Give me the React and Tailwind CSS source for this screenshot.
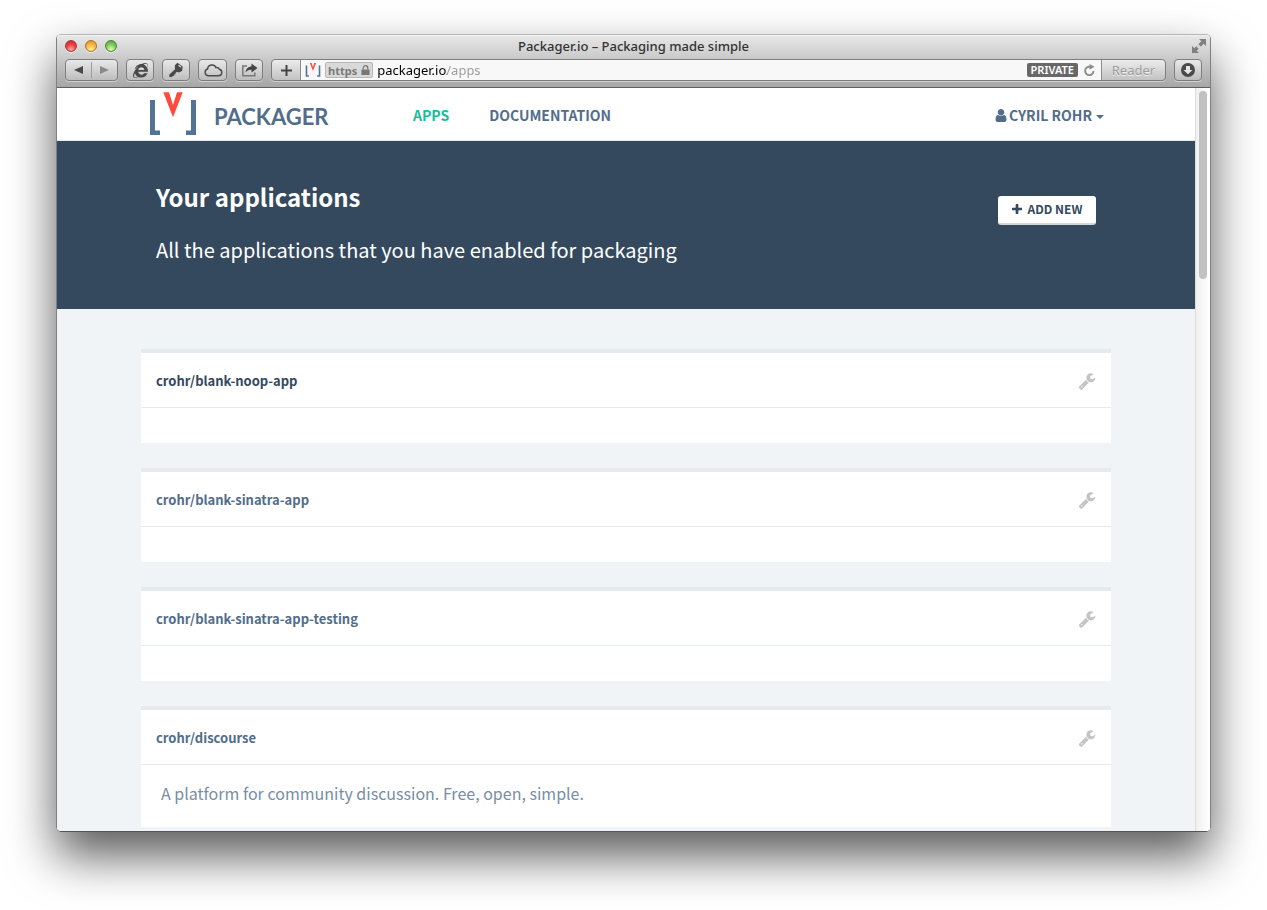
import React from "react";
import { FaInternetExplorer } from "react-icons/fa";

const apps = [
  { name: "crohr/blank-noop-app", active: true },
  { name: "crohr/blank-sinatra-app" },
  { name: "crohr/blank-sinatra-app-testing" },
  { name: "crohr/discourse", description: "A platform for community discussion. Free, open, simple." },
];

const toolButton =
  "flex h-[22px] items-center justify-center rounded-[4px] border border-[#7d7d7d] bg-linear-to-b from-[#e9e9e9] to-[#bdbdbd] text-[#4a4a4a] shadow-[0_1px_0_#d0d0d0]";

function WrenchIcon({ className }) {
  return (
    <svg viewBox="0 0 1792 1792" className={className} fill="currentColor" aria-hidden="true">
      <path d="M448 1472q0-26-19-45t-45-19-45 19-19 45 19 45 45 19 45-19 19-45zm644-420l-682 682q-37 37-90 37-52 0-91-37l-106-108q-38-36-38-90 0-53 38-91l681-681q39 98 114.5 173.5t173.5 114.5zm634-435q0 39-23 106-47 134-164.5 217.5t-258.5 83.5q-185 0-316.500-131.5t-131.5-316.5 131.5-316.5 316.5-131.5q58 0 121.5 16.5t107.5 46.5q16 11 16 28t-16 28l-293 169v224l193 107q5-3 79-48.5t135.500-81 70.500-35.5q15 0 23.5 10t8.5 25z" />
    </svg>
  );
}

function UserIcon({ className }) {
  return (
    <svg viewBox="192 128 1408 1536" preserveAspectRatio="none" className={className} fill="currentColor" aria-hidden="true">
      <path d="M1536 1399q0 109-62.5 187t-150.5 78h-854q-88 0-150.5-78t-62.5-187q0-85 8.5-160.5t31.5-152 58.5-131 94-89 134.5-34.5q131 128 313 128t313-128q76 0 134.5 34.5t94 89 58.5 131 31.5 152 8.5 160.5zm-256-887q0 159-112.5 271.5t-271.5 112.5-271.5-112.5-112.5-271.5 112.5-271.5 271.5-112.5 271.5 112.5 112.5 271.5z" />
    </svg>
  );
}

function PlusIcon({ className }) {
  return (
    <svg viewBox="192 128 1408 1408" className={className} fill="currentColor" aria-hidden="true">
      <path d="M1600 736v192q0 40-28 68t-68 28h-416v416q0 40-28 68t-68 28h-192q-40 0-68-28t-28-68v-416h-416q-40 0-68-28t-28-68v-192q0-40 28-68t68-28h416v-416q0-40 28-68t68-28h192q40 0 68 28t28 68v416h416q40 0 68 28t28 68z" />
    </svg>
  );
}

function LogoMark({ className }) {
  return (
    <svg viewBox="0 0 48 44" className={className} aria-hidden="true">
      <path d="M1 8h5v30.500h5V43H1zM47 8h-5v30.500h-5V43h10z" fill="#527393" />
      <path d="M14.300 .3h5.700L24 13 28 .3h5.700L24 25.300z" fill="#ff4b3e" />
    </svg>
  );
}

function Light({ label, className }) {
  return (
    <button
      type="button"
      aria-label={label}
      className={`size-3 rounded-full border shadow-[0_1px_0_#f4f4f4] ${className}`}
    />
  );
}

function BrowserChrome() {
  return (
    <div className="rounded-t-[4px] border-b border-[#5f5f5f] bg-linear-to-b from-[#e8e8e8] to-[#a6a6a6] font-['Noto_Sans',sans-serif] shadow-[inset_0_1px_0_#f2f2f2]">
      <div className="grid h-[22px] grid-cols-[1fr_auto_1fr] items-center px-2">
        <div className="flex gap-2">
          <Light label="Close" className="border-[#a03a38] bg-[radial-gradient(circle_at_50%_85%,#ffb3ab_0%,#f2474a_45%,#c4232a_100%)]" />
          <Light label="Minimize" className="border-[#a9712c] bg-[radial-gradient(circle_at_50%_85%,#fff2a0_0%,#fbb745_50%,#d98a24_100%)]" />
          <Light label="Zoom" className="border-[#4c8237] bg-[radial-gradient(circle_at_50%_85%,#dcffb0_0%,#83cc5f_50%,#4f9c3b_100%)]" />
        </div>
        <h1 className="text-[13px] leading-[22px] font-medium text-[#333]">Packager.io – Packaging made simple</h1>
        <button type="button" aria-label="Full screen" className="justify-self-end -mr-1 text-[#808080]">
          <svg viewBox="0 0 14 14" className="size-[14px]" fill="currentColor">
            <path d="M14 0v7l-2.300-2.300-3 3L6.300 5.300l3-3L7 0zM0 14V7l2.300 2.300 2-2 2.400 2.400-2 2L7 14z" />
            <path d="M5.500 5.500l3 3" stroke="#d4d4d4" strokeWidth="1.500" />
          </svg>
        </button>
      </div>
      <div className="flex gap-2 px-2 pt-[2px] pb-[6px]">
        <div className={`${toolButton} w-[53px]`}>
          <button type="button" aria-label="Back" className="flex h-full flex-1 items-center justify-center">
            <svg viewBox="0 0 9 8" className="h-2 w-[9px]" fill="currentColor"><path d="M9 0v8L0 4z" /></svg>
          </button>
          <span className="h-4 w-px bg-[#9c9c9c]" />
          <button type="button" aria-label="Forward" className="flex h-full flex-1 items-center justify-center text-[#8a8a8a]">
            <svg viewBox="0 0 9 8" className="h-2 w-[9px]" fill="currentColor"><path d="M0 0v8l9-4z" /></svg>
          </button>
        </div>
        <button type="button" aria-label="Internet Explorer" className={`${toolButton} w-7`}>
          <FaInternetExplorer className="size-[15px]" />
        </button>
        <button type="button" aria-label="Passwords" className={`${toolButton} w-7`}>
          <svg viewBox="0 0 16 16" className="size-4" fill="currentColor">
            <path d="M9.500 .8l5.200 3.800-.6 4.400-3.300 1.500-2-.8-1.400 1.500.3 1-1.300.1-.2 1.500-1.400.1L3.500 15.300 1.200 14.800l.2-2.300L7 7.200 6.800 3.200z" />
            <path d="M11 3.500l1.600 1.200" stroke="#d8d8d8" strokeWidth="1.400" strokeLinecap="round" />
          </svg>
        </button>
        <button type="button" aria-label="iCloud tabs" className={`${toolButton} w-[29px]`}>
          <svg viewBox="0 0 20 14" className="h-[14px] w-5" fill="none" stroke="currentColor" strokeWidth="1.400">
            <path d="M5 12.800h10.500a3.300 3.300 0 0 0 .8-6.500A2.800 2.800 0 0 0 13 4.600 4.400 4.400 0 0 0 4.600 6 3.500 3.500 0 0 0 5 12.800z" />
          </svg>
        </button>
        <button type="button" aria-label="Share" className={`${toolButton} w-7`}>
          <svg viewBox="0 0 17 14" className="h-[14px] w-[17px]">
            <path d="M6 3H1.800v9.800h12V9.500" fill="none" stroke="#777" strokeWidth="1.500" />
            <path d="M10.500 .5l6 4.500-6 4.500V6.800C7.500 6.700 5.800 7.700 4.500 9.800c.2-4 2.300-6.200 6-6.600z" fill="#444" />
          </svg>
        </button>
        <div className="flex h-[22px] min-w-0 flex-1 items-stretch rounded-[4px] border border-[#7d7d7d] bg-linear-to-b from-[#ececec] to-[#c2c2c2] shadow-[0_1px_0_#d0d0d0]">
          <button type="button" aria-label="Add bookmark" className="flex w-7 items-center justify-center text-[#444]">
            <svg viewBox="0 0 11 11" className="size-[11px]" fill="currentColor"><path d="M4.500 0h2v4.500H11v2H6.500V11h-2V6.500H0v-2h4.500z" /></svg>
          </button>
          <div className="flex min-w-0 flex-1 items-center gap-1 border-x border-[#8c8c8c] bg-[#f8f8f8] px-1">
            <LogoMark className="h-[14px] w-4" />
            <span className="flex h-4 items-center gap-1 rounded-[2px] border border-[#b8b8b8] bg-[#d9d9d9] px-[2px] text-[11px] leading-none font-bold text-[#7a7a7a]">
              https
              <svg viewBox="0 0 9 11" className="h-[10px] w-[9px]"><path d="M2 5V3.300a2.500 2.500 0 0 1 5 0V5" fill="none" stroke="#777" strokeWidth="1.400" /><path d="M0 5h9v6H0z" fill="#777" /></svg>
            </span>
            <input
              aria-label="Address"
              defaultValue="packager.io/apps"
              className="min-w-0 flex-1 bg-[linear-gradient(to_right,#000_70px,#999_70px)] bg-clip-text text-[13px] leading-5 text-transparent outline-none"
            />
            <span className="rounded-[2px] bg-[#686868] px-1 text-[11px] leading-[14px] font-semibold text-white">PRIVATE</span>
            <button type="button" aria-label="Reload" className="mx-[2px] text-[#8b8b8b]">
              <svg viewBox="0 0 11 12" className="h-3 w-[11px]"><path d="M9.500 7A4.200 4.200 0 1 1 6 2.800" fill="none" stroke="currentColor" strokeWidth="1.800" /><path d="M5.500 0l5 2.800-5 3z" fill="currentColor" /></svg>
            </button>
          </div>
          <button type="button" className="w-[63px] text-[13px] leading-5 text-[#9e9e9e] [text-shadow:0_1px_0_#eee]">Reader</button>
        </div>
        <button type="button" aria-label="Downloads" className={`${toolButton} w-7`}>
          <svg viewBox="0 0 14 14" className="size-[14px]"><circle cx="7" cy="7" r="7" fill="#4a4a4a" /><path d="M5 3h4v4h2.500L7 11.300 2.500 7H5z" fill="#e6e6e6" /></svg>
        </button>
      </div>
    </div>
  );
}

function Navbar() {
  return (
    <nav className="border-b border-[#e5e9ec] bg-white text-[14px] font-bold text-[#526d8a]">
      <div className="mx-auto flex h-[52px] max-w-[970px] items-center pr-[7px] pl-2">
        <a href="#home" className="flex w-[264px] items-center gap-[17px]">
          <LogoMark className="h-11 w-12" />
          <span className="pt-[6px] font-['Lato',sans-serif] text-[22px] leading-8">PACKAGER</span>
        </a>
        <a href="#apps" className="pt-[2px] text-[#1abc9c]">APPS</a>
        <a href="#documentation" className="ml-10 pt-[2px]">DOCUMENTATION</a>
        <button type="button" className="ml-auto flex items-center gap-[2px] pt-[2px]">
          <UserIcon className="h-[13px] w-3" />
          CYRIL ROHR
          <svg viewBox="0 0 8 4" className="ml-[2px] mt-1 h-1 w-2" fill="currentColor"><path d="M0 0h8L4 4z" /></svg>
        </button>
      </div>
    </nav>
  );
}

function AppCard({ app }) {
  return (
    <article className="border-t-4 border-[#e5eaed] bg-white">
      <header className="flex h-[55px] items-center justify-between border-b border-[#e5eaed] px-[15px] pt-[2px]">
        <h3 className={`text-[13px] font-bold ${app.active ? "text-[#34495e]" : "text-[#526d8a]"}`}>
          <a href={`#${app.name}`}>{app.name}</a>
        </h3>
        <button type="button" aria-label={`Settings for ${app.name}`} className="text-[#c4c4c4]">
          <WrenchIcon className="size-[18px]" />
        </button>
      </header>
      {app.description ? (
        <p className="px-5 pt-[15px] pb-[21px] text-[16px] leading-[26px] text-[#778ea5]">{app.description}</p>
      ) : (
        <div className="h-[35px]" />
      )}
    </article>
  );
}

export default function App() {
  return (
    <div className="min-h-screen bg-white px-14 pt-[34px] pb-[78px]">
      <div className="rounded-[5px] border border-t-[#b5b5b5] border-x-[#808080] border-b-[#555] shadow-[0_24px_48px_rgba(0,0,0,0.65)]">
        <BrowserChrome />
        <div className="flex overflow-hidden rounded-b-[4px] bg-[#f0f4f7] font-['Noto_Sans_CJK_SC',sans-serif]">
          <div className="min-w-0 flex-1">
            <Navbar />
            <header className="bg-[#34495e] text-white">
              <div className="mx-auto flex h-42 max-w-[970px] items-start justify-between px-[15px]">
                <div>
                  <h2 className="pt-[39px] text-[24px] leading-[34px] font-bold">Your applications</h2>
                  <p className="pt-4 text-[20px] leading-10">All the applications that you have enabled for packaging</p>
                </div>
                <button type="button" className="mt-[55px] flex h-[29px] w-[98px] items-center justify-center gap-[6px] rounded-[3px] border-b-2 border-[#d4d6d8] bg-white pb-[2px] text-[12px] font-bold text-[#34495e]">
                  <PlusIcon className="size-[10px]" />
                  ADD NEW
                </button>
              </div>
            </header>
            <main className="mx-auto grid max-w-[970px] gap-[25px] pt-10 pb-1">
              {apps.map((app) => (
                <AppCard key={app.name} app={app} />
              ))}
            </main>
          </div>
          <div className="w-[15px] border-l border-[#dcdcdc] bg-linear-to-r from-[#f0f0f0] to-white px-[3px] pt-[3px]">
            <div className="h-[188px] rounded-full bg-[#c1c1c1]" />
          </div>
        </div>
      </div>
    </div>
  );
}
